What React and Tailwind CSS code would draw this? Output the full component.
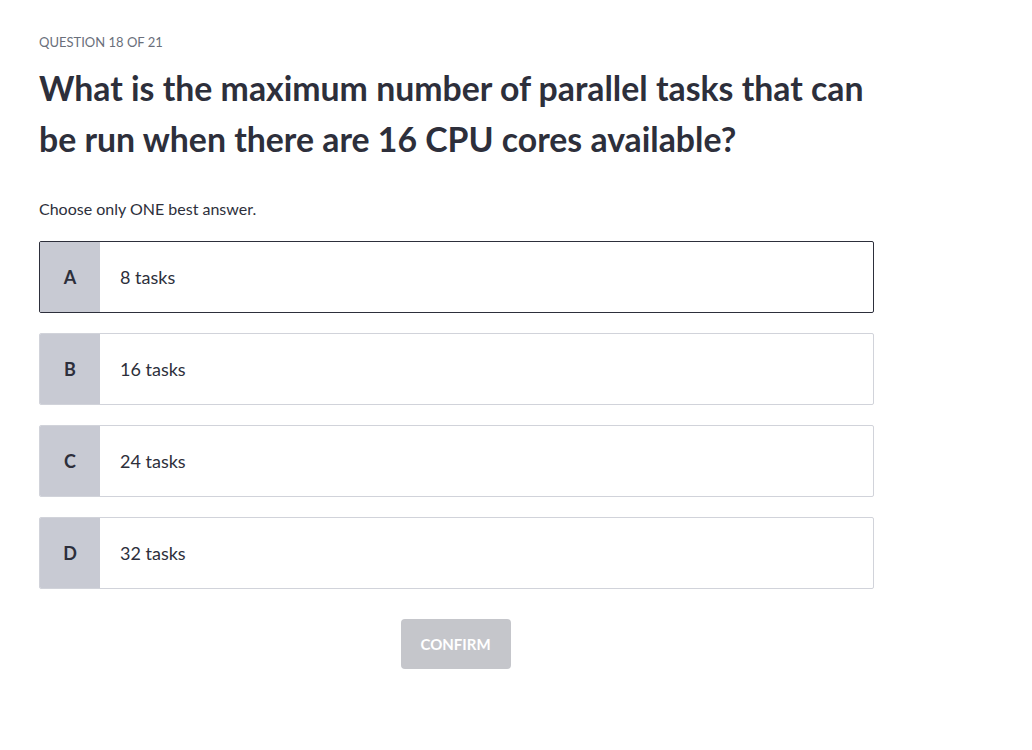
const options = [
  { key: "A", text: "8 tasks", selected: true },
  { key: "B", text: "16 tasks" },
  { key: "C", text: "24 tasks" },
  { key: "D", text: "32 tasks" },
];

export default function App() {
  return (
    <div
      className="min-h-[750px] bg-white text-[#2d2f3b]"
      style={{ fontFamily: "Lato, 'Open Sans', sans-serif" }}
    >
      <div className="w-[835px] ml-[39px] pt-[33px]">
        <div className="text-[13px] leading-[18px] text-[#6a6f7b]">
          QUESTION 18 OF 21
        </div>
        <h1 className="mt-[12px] text-[33.8px] leading-[51px] font-bold text-[#2d2f3b]">
          What is the maximum number of parallel tasks that can be run when
          there are 16 CPU cores available?
        </h1>
        <p className="mt-[34px] text-[16px] leading-[20px]">Choose only ONE best answer.</p>
        <div className="mt-[22px] flex flex-col gap-[20px]">
          {options.map((o) => (
            <div
              key={o.key}
              className={`flex h-[72px] rounded-[2px] overflow-hidden border ${
                o.selected ? "border-[#2d2f3b]" : "border-[#d1d3da]"
              }`}
            >
              <div className="w-[60px] bg-[#c8cad3] flex items-center justify-center text-[18px] font-bold">
                {o.key}
              </div>
              <div className="flex items-center pl-[20px] text-[18px]">{o.text}</div>
            </div>
          ))}
        </div>
        <div className="mt-[30px] flex justify-center">
          <button className="w-[110px] h-[50px] rounded-[4px] bg-[#c5c6cb] text-white font-bold text-[15px] -translate-x-[1px]">
            CONFIRM
          </button>
        </div>
      </div>
    </div>
  );
}
